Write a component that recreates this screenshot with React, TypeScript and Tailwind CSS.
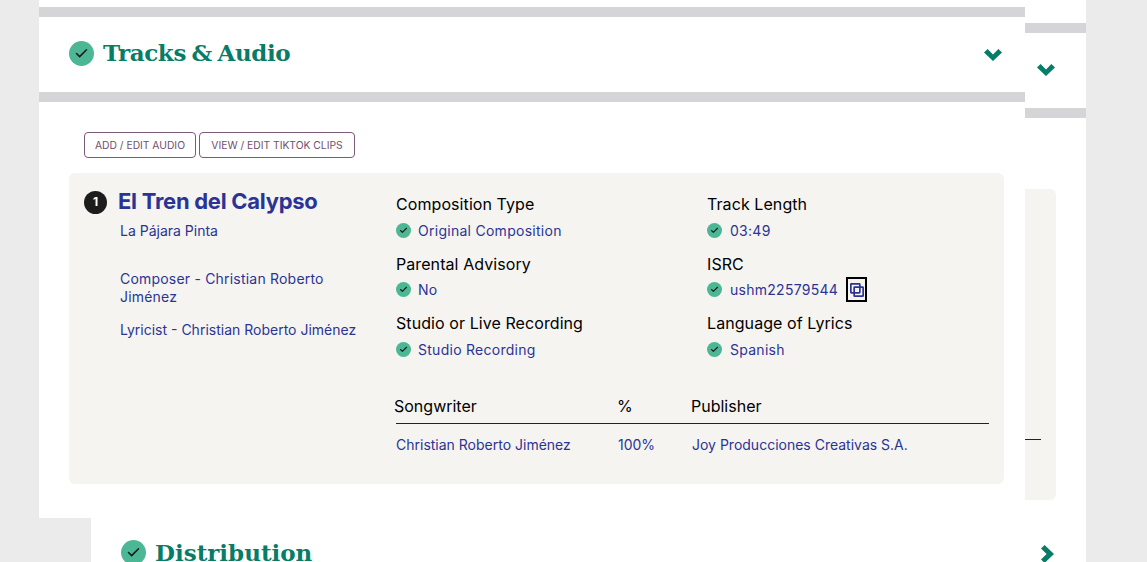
import React from 'react';
import { Check } from 'lucide-react';

const serif = "font-['DejaVu_Serif','Liberation_Serif',serif]";

const StatusDot = ({ big = false }: { big?: boolean }) => (
  <span
    className={`flex shrink-0 items-center justify-center rounded-full bg-[#4cb795] ${
      big ? 'h-[25px] w-[25px]' : 'h-[15px] w-[15px]'
    }`}
  >
    <Check size={big ? 15 : 9} strokeWidth={big ? 2.5 : 3} className="text-[#1a1a1a]" />
  </span>
);

const GreyBar = () => <div className="h-[10px] shrink-0 bg-[#d5d5d7]" />;

const ChevronDownIcon = () => (
  <svg width="18" height="12" viewBox="0 0 18 12" className="shrink-0 fill-[#077c66]">
    <polygon points="0,3.6 3.6,0 9,5.6 14.4,0 18,3.6 9,12" />
  </svg>
);

const ChevronRightIcon = () => (
  <svg width="13" height="18" viewBox="0 0 13 18" className="shrink-0 fill-[#077c66]">
    <polygon points="3.6,0 13,9 3.6,18 0,14.4 5.6,9 0,3.6" />
  </svg>
);

const Field = ({
  label,
  value,
  right = false,
  children,
}: {
  label: string;
  value: string;
  right?: boolean;
  children?: React.ReactNode;
}) => (
  <div className="h-[59.5px]">
    <div className="text-[16px] leading-[20px] tracking-[0.08px] text-black">{label}</div>
    <div className="mt-[6px] flex h-[20px] items-center">
      <StatusDot />
      <span className={`${right ? 'ml-[8px]' : 'ml-[7px]'} text-[14px] tracking-[0.27px] text-[#2b3494]`}>{value}</span>
      {children}
    </div>
  </div>
);

const CopyButton = () => (
  <span className="ml-[8px] flex h-[25px] w-[21px] items-center justify-center border-2 border-black">
    <svg width="14" height="14" viewBox="0 0 14 14" fill="none" stroke="#2b3494" strokeWidth="1.7">
      <rect x="0.85" y="0.85" width="9" height="9" rx="0.5" />
      <rect x="4.15" y="4.15" width="9" height="9" rx="0.5" />
    </svg>
  </span>
);

export default function App() {
  return (
    <div className="relative h-[562px] w-[1147px] overflow-hidden bg-[#ebebeb] font-['Inter','Liberation_Sans',sans-serif]">
      {/* back card, mostly covered by the open section */}
      <div className="ml-[91px] flex h-[562px] w-[995px] flex-col bg-white pt-[23px]">
        <GreyBar />
        <div className="flex h-[75px] shrink-0 items-center justify-end pb-[1px] pr-[31px]">
          <ChevronDownIcon />
        </div>
        <GreyBar />
        <div className="ml-auto mr-[30px] mt-[71px] h-[311px] w-[40px] shrink-0 rounded-[6px] bg-[#f5f4f1] pt-[250px]">
          <div className="h-px w-[25px] bg-[#222]" />
        </div>
        <div className="mt-[37px] flex shrink-0 items-center pl-[30px] pr-[32px]">
          <StatusDot big />
          <h2 className={`${serif} ml-[9px] translate-y-px text-[23px] font-bold leading-[30px] text-[#077c66]`}>
            Distribution
          </h2>
          <span className="ml-auto pt-[4px]">
            <ChevronRightIcon />
          </span>
        </div>
      </div>

      {/* open section */}
      <div className="absolute left-[39px] top-0 h-[518px] w-[986px] bg-white pt-[7px]">
        <GreyBar />
        <div className="flex h-[75px] items-center justify-between pl-[30px] pr-[23px]">
          <div className="mb-[3px] flex items-center">
            <StatusDot big />
            <h2
              className={`${serif} ml-[9px] text-[23px] font-bold leading-[30px] tracking-[-0.4px] text-[#077c66] [word-spacing:-2px]`}
            >
              Tracks &amp; Audio
            </h2>
          </div>
          <ChevronDownIcon />
        </div>
        <GreyBar />

        <div className="ml-[45px] mt-[30px] flex gap-[3px]">
          <button className="h-[26px] w-[112px] rounded-[4px] border border-[#7b5a7c] pt-px text-[10.3px] text-[#6f5070]">
            ADD / EDIT AUDIO
          </button>
          <button className="h-[26px] w-[156px] rounded-[4px] border border-[#7b5a7c] pt-px text-[10.3px] text-[#6f5070]">
            VIEW / EDIT TIKTOK CLIPS
          </button>
        </div>

        <div className="ml-[30px] mt-[15px] flex h-[311px] w-[935px] rounded-[6px] bg-[#f5f4f1] pl-[15px] pr-[15px] pt-[16px]">
          <div className="w-[312px]">
            <div className="flex h-[26px] items-center">
              <span className="flex h-[23px] w-[23px] items-center justify-center rounded-full bg-[#1c1c1c] text-[12px] font-bold text-white">
                1
              </span>
              <span className="mb-[2px] ml-[11px] text-[22px] font-bold leading-[24px] tracking-[-0.27px] text-[#2b3494]">
                El Tren del Calypso
              </span>
            </div>
            <div className="ml-[36px] mt-[7px] text-[14px] leading-[18px] text-[#2b3494]">
              <div>La Pájara Pinta</div>
              <div className="mt-[30px] w-[225px] tracking-[0.2px]">Composer - Christian Roberto Jiménez</div>
              <div className="mt-[15px]">Lyricist - Christian Roberto Jiménez</div>
            </div>
          </div>

          <div className="flex-1">
            <div className="flex pt-[5px]">
              <div className="w-[311px]">
                <Field label="Composition Type" value="Original Composition" />
                <Field label="Parental Advisory" value="No" />
                <Field label="Studio or Live Recording" value="Studio Recording" />
              </div>
              <div>
                <Field right label="Track Length" value="03:49" />
                <Field right label="ISRC" value="ushm22579544">
                  <CopyButton />
                </Field>
                <Field right label="Language of Lyrics" value="Spanish" />
              </div>
            </div>
            <div className="mt-[21px] flex h-[30px] items-start border-b border-[#222] text-[16px] leading-[24px] text-black">
              <span className="-ml-[2px] w-[223px]">Songwriter</span>
              <span className="w-[74px]">%</span>
              <span>Publisher</span>
            </div>
            <div className="mt-[11px] flex text-[14px] leading-[20px] text-[#2b3494]">
              <span className="w-[222px]">Christian Roberto Jiménez</span>
              <span className="w-[74px]">100%</span>
              <span>Joy Producciones Creativas S.A.</span>
            </div>
          </div>
        </div>
      </div>
    </div>
  );
}
